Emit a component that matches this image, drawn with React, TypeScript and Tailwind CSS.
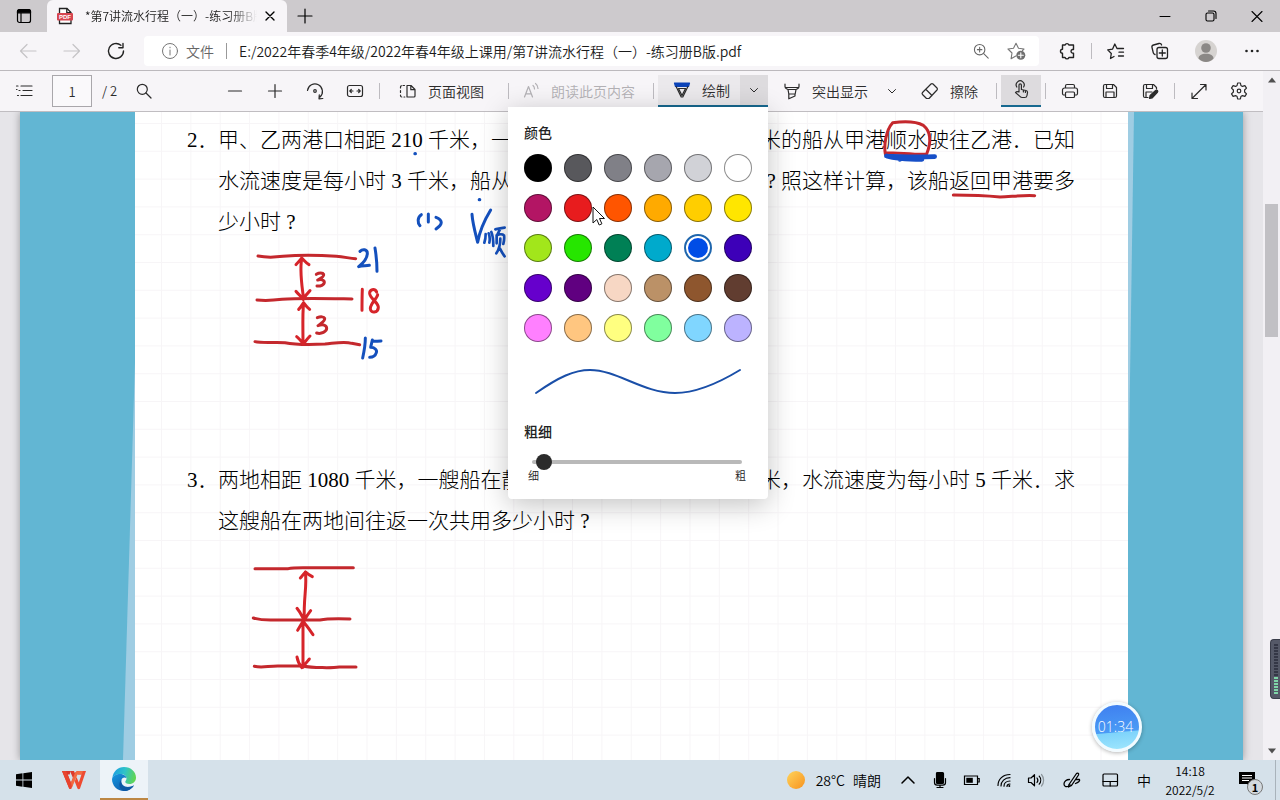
import React, { useState } from "react";

type Kids = { children?: React.ReactNode };

function Icon({
  children,
  className = "w-5 h-5",
  width = 1,
}: Kids & { className?: string; width?: number }) {
  return (
    <svg
      viewBox="0 0 20 20"
      className={`shrink-0 ${className}`}
      fill="none"
      stroke="currentColor"
      strokeWidth={width}
      strokeLinecap="round"
      strokeLinejoin="round"
      aria-hidden="true"
    >
      {children}
    </svg>
  );
}

function IconButton({
  label,
  className = "w-10",
  children,
}: Kids & { label: string; className?: string }) {
  return (
    <button
      type="button"
      aria-label={label}
      className={`flex h-8 shrink-0 items-center justify-center ${className}`}
    >
      {children}
    </button>
  );
}

function Divider() {
  return <span className="mx-1 h-4 w-px shrink-0 bg-[#bdbbc0]" />;
}

const chevronDown = <path d="M6.5 8.5l3.5 3.5 3.5-3.5" />;

function TabBar() {
  return (
    <header className="flex h-8 shrink-0 items-stretch bg-[#cdcacd]">
      <IconButton label="标签页操作" className="w-[47px]">
        <Icon width={1.2}>
          <rect x="3.5" y="3.5" width="13" height="13" rx="2" />
          <path d="M3.5 5.5a2 2 0 012-2h9a2 2 0 012 2v1.3h-13z" fill="currentColor" />
          <path d="M7 7v9.5" />
        </Icon>
      </IconButton>
      <div className="flex w-60 items-center rounded-t-md bg-[#f7f5f8] pl-[9px] pr-1">
        <svg viewBox="0 0 18 18" className="h-[18px] w-[18px] shrink-0" aria-hidden="true">
          <path d="M3.5 1.5h7.5l4 4v11h-11.5z" fill="#fff" stroke="#222" strokeWidth="1.3" />
          <path d="M10.8 1.5v4.2h4.2" fill="none" stroke="#222" strokeWidth="1.3" />
          <rect x="1" y="6" width="16" height="7.5" rx="1" fill="#d64550" />
          <text
            x="9"
            y="12"
            textAnchor="middle"
            fontFamily="Liberation Sans, sans-serif"
            fontWeight="700"
            fontSize="6"
            fill="#fff"
          >
            PDF
          </text>
        </svg>
        <span className="ml-[11px] flex-1 overflow-hidden whitespace-nowrap text-xs text-[#1b1b1b] [mask-image:linear-gradient(to_right,#000_84%,transparent)]">
          *第7讲流水行程（一）-练习册B版
        </span>
        <IconButton label="关闭标签页" className="w-[26px]">
          <Icon className="h-4 w-4" width={1.7}>
            <path d="M5 5l10 10M15 5L5 15" />
          </Icon>
        </IconButton>
      </div>
      <IconButton label="新建标签页" className="w-9">
        <Icon width={1.2}>
          <path d="M10 3v14M3 10h14" />
        </Icon>
      </IconButton>
      <div className="ml-auto flex">
        <IconButton label="最小化" className="w-[46px]">
          <Icon>
            <path d="M5 10.5h10" />
          </Icon>
        </IconButton>
        <IconButton label="还原" className="w-[46px]">
          <Icon width={1.1}>
            <rect x="5" y="7" width="8" height="8" rx="1.5" />
            <path d="M7.5 5h5a2.5 2.5 0 012.5 2.5v5" />
          </Icon>
        </IconButton>
        <IconButton label="关闭" className="w-[46px]">
          <Icon width={1.1}>
            <path d="M5 5.5l10 10M15 5.5l-10 10" />
          </Icon>
        </IconButton>
      </div>
    </header>
  );
}

function AddressBar() {
  return (
    <div className="flex h-[39px] shrink-0 items-center border-b border-[#bcb9bd] bg-[#f7f5f8] px-1.5 text-[#222]">
      <IconButton label="后退" className="w-11 text-[#c5c3c6]">
        <Icon width={1.2}>
          <path d="M18 10H2.5M9 3.5L2.5 10 9 16.5" />
        </Icon>
      </IconButton>
      <IconButton label="前进" className="w-11 text-[#c5c3c6]">
        <Icon width={1.2}>
          <path d="M2 10h15.5M11 3.5l6.5 6.5-6.5 6.5" />
        </Icon>
      </IconButton>
      <IconButton label="刷新" className="w-11">
        <Icon width={1.4}>
          <path d="M17.500 10a7.500 7.500 0 11-2.600-5.700M17 2.500v4.200h-4.200" />
        </Icon>
      </IconButton>
      <div className="ml-1.5 flex h-[30px] min-w-0 flex-1 items-center rounded bg-white pl-4 pr-1 text-sm">
        <Icon className="h-5 w-5 text-[#777]">
          <circle cx="10" cy="10" r="7.5" />
          <path d="M10 9v5M10 6.200v.6" />
        </Icon>
        <span className="ml-1.5 text-[#666]">文件</span>
        <span className="mx-3 h-4 w-px bg-[#999]" />
        <input
          aria-label="地址"
          readOnly
          value="E:/2022年春季4年级/2022年春4年级上课用/第7讲流水行程（一）-练习册B版.pdf"
          className="min-w-0 flex-1 bg-transparent text-[#1b1b1b] outline-none"
        />
        <IconButton label="缩放" className="w-9 text-[#666]">
          <Icon className="h-[18px] w-[18px]" width={1.2}>
            <circle cx="8.5" cy="8.500" r="5.800" />
            <path d="M13 13l5 5M6 8.500h5M8.500 6v5" />
          </Icon>
        </IconButton>
        <IconButton label="添加到收藏夹" className="w-9 text-[#777]">
          <Icon width={1.1}>
            <path d="M8.800 15l-4.700 2.700.9-5.700L1 8l5.500-.8L9 2.200l2.500 5 5.500.8-1.500 1.500" />
            <circle cx="13.800" cy="14.200" r="4.500" fill="#6f6f6f" stroke="none" />
            <path d="M13.800 11.700v5M11.300 14.200h5" stroke="#fff" />
          </Icon>
        </IconButton>
      </div>
      <IconButton label="扩展" className="ml-1.5 w-11">
        <Icon width={1.4}>
          <path d="M5.500 4h2.600a2 2 0 013.800 0h4.600v4.500h-1.200a1.900 1.900 0 000 3.600h1.200v4.400h-4.600a2 2 0 01-3.800 0H5.500v-4.300a2 2 0 010-4z" />
        </Icon>
      </IconButton>
      <span className="mx-0.5 h-4 w-px bg-[#bdbbc0]" />
      <IconButton label="收藏夹" className="w-11">
        <Icon width={1.3}>
          <path d="M8 15.500l-3.500 2 .8-5-3.600-3.600 4.900-.8L8.800 3l2.200 4.500h6.500M13 11.200h4.500M12.500 15h5" />
        </Icon>
      </IconButton>
      <IconButton label="集锦" className="w-11">
        <Icon width={1.3}>
          <rect x="7" y="6.500" width="10.500" height="11" rx="2" />
          <path d="M12.300 9v6M9.300 12h6M5 13.500c-.8-.2-1.500-.8-1.700-1.600L2 6.500c-.3-1.100.4-2.200 1.500-2.500L9 2.500c1.200-.3 2.300.5 2.600 1.500" />
        </Icon>
      </IconButton>
      <IconButton label="个人资料" className="w-12">
        <svg viewBox="0 0 22 22" className="h-[22px] w-[22px]" aria-hidden="true">
          <circle cx="11" cy="11" r="11" fill="#d6d3d1" />
          <circle cx="11" cy="8" r="4.800" fill="#8b8886" />
          <path d="M3.500 18.500c0-3 3-4.800 7.500-4.800s7.500 1.800 7.500 4.800c-2 2.300-4.500 3.500-7.500 3.500s-5.500-1.200-7.500-3.500z" fill="#8b8886" />
        </svg>
      </IconButton>
      <IconButton label="设置及其他" className="w-11">
        <Icon>
          <g fill="currentColor" stroke="none">
            <circle cx="4.5" cy="10" r="1.3" />
            <circle cx="10" cy="10" r="1.3" />
            <circle cx="15.5" cy="10" r="1.3" />
          </g>
        </Icon>
      </IconButton>
    </div>
  );
}

const palette: [string, string][] = [
  ["黑色", "bg-[#000000]"],
  ["深灰", "bg-[#58585c]"],
  ["中灰", "bg-[#808087]"],
  ["灰色", "bg-[#a6a6ae]"],
  ["浅灰", "bg-[#d1d2d7]"],
  ["白色", "bg-[#ffffff]"],
  ["洋红", "bg-[#b31564]"],
  ["红色", "bg-[#e81c1e]"],
  ["橙红", "bg-[#ff5500]"],
  ["橙色", "bg-[#ffaa00]"],
  ["金色", "bg-[#ffce00]"],
  ["黄色", "bg-[#ffe600]"],
  ["黄绿", "bg-[#a2e61b]"],
  ["亮绿", "bg-[#26e600]"],
  ["绿色", "bg-[#008055]"],
  ["青色", "bg-[#00aacc]"],
  ["蓝色", "bg-[#004de6]"],
  ["靛蓝", "bg-[#3d00b8]"],
  ["紫罗兰", "bg-[#6600cc]"],
  ["紫色", "bg-[#600080]"],
  ["浅肤", "bg-[#f7d7c4]"],
  ["棕褐", "bg-[#bb9167]"],
  ["褐色", "bg-[#8e562e]"],
  ["深褐", "bg-[#613d30]"],
  ["粉色", "bg-[#ff80ff]"],
  ["浅橙", "bg-[#ffc680]"],
  ["浅黄", "bg-[#ffff80]"],
  ["浅绿", "bg-[#80ff9e]"],
  ["浅蓝", "bg-[#80d6ff]"],
  ["浅紫", "bg-[#bcb3ff]"],
];

function DrawMenu() {
  const [picked, setPicked] = useState(16);
  return (
    <div className="absolute right-0 top-full z-20 mt-0.5 w-[260px] rounded-b bg-white px-4 pb-[18px] pt-[15px] text-[#222] shadow-[0_6px_28px_rgba(0,0,0,0.24)]">
      <h2 className="text-sm font-medium leading-5">颜色</h2>
      <div className="relative mt-3 grid grid-cols-6 gap-3">
        {palette.map(([name, color], i) => (
          <button
            key={name}
            type="button"
            aria-label={name}
            aria-pressed={i === picked}
            onClick={() => setPicked(i)}
            className={
              i === picked
                ? "flex h-7 w-7 items-center justify-center rounded-full border-2 border-[#1f66ad] bg-white"
                : `h-7 w-7 rounded-full border border-black/45 ${color}`
            }
          >
            {i === picked && <span className={`h-5 w-5 rounded-full ${color}`} />}
          </button>
        ))}
        <svg viewBox="0 0 14 20" className="absolute left-[68px] top-[52px] h-5 w-3.5" aria-hidden="true">
          <path d="M1 1v16l3.800-3.500 2.400 5.500 2.700-1.200-2.400-5.300h5z" fill="#fff" stroke="#111" strokeWidth="1" />
        </svg>
      </div>
      <svg viewBox="0 0 228 40" className="mt-5 h-10 w-full" fill="none" aria-hidden="true">
        <path d="M12 31C35 15 50 8 66 8c27 0 53 23 85 23 20 0 42-9 65-23" stroke="#1a4fa8" strokeWidth="2" strokeLinecap="round" />
      </svg>
      <label htmlFor="thickness" className="mt-[19px] block text-sm font-medium leading-5">
        粗细
      </label>
      <input
        id="thickness"
        type="range"
        min={0}
        max={100}
        defaultValue={2}
        className="ml-2 mt-[13px] block h-4 w-[210px] appearance-none bg-transparent [&::-webkit-slider-runnable-track]:h-1 [&::-webkit-slider-runnable-track]:rounded-full [&::-webkit-slider-runnable-track]:bg-[#b9b9b9] [&::-webkit-slider-thumb]:-mt-1.5 [&::-webkit-slider-thumb]:h-4 [&::-webkit-slider-thumb]:w-4 [&::-webkit-slider-thumb]:appearance-none [&::-webkit-slider-thumb]:rounded-full [&::-webkit-slider-thumb]:bg-[#2b2b2b]"
      />
      <div className="flex justify-between pl-1 pr-1.5 text-[11px] leading-[11px]">
        <span>细</span>
        <span>粗</span>
      </div>
    </div>
  );
}

function PdfToolbar() {
  return (
    <div className="flex h-[41px] shrink-0 items-center justify-between border-b border-[#c0bdc1] bg-[#f7f5f8] px-1 text-sm text-[#2b2b2b]">
      <div className="flex items-center">
        <IconButton label="目录">
          <Icon width={1.2}>
            <path d="M7 5h11M9 9.500h9M7 14.500h11" />
            <path d="M2.500 5h1.500M2.500 8.500h.5M5 9.500h1M3.500 14.500h1" />
          </Icon>
        </IconButton>
        <input
          aria-label="页码"
          defaultValue="1"
          className="ml-2 h-8 w-10 border border-[#a9a7ab] bg-white/40 text-center text-[13px] outline-none"
        />
        <span className="w-8 pl-2.5 text-[13px]">/ 2</span>
        <IconButton label="查找">
          <Icon width={1.2}>
            <circle cx="8.300" cy="8.300" r="5" />
            <path d="M12 12l5 5" />
          </Icon>
        </IconButton>
      </div>
      <div className="flex items-center">
        <IconButton label="缩小">
          <Icon width={1.2}>
            <path d="M3.500 10h13" />
          </Icon>
        </IconButton>
        <IconButton label="放大">
          <Icon width={1.2}>
            <path d="M3.500 10h13M10 3.500v13" />
          </Icon>
        </IconButton>
        <IconButton label="旋转">
          <Icon width={1.2}>
            <path d="M2.500 9.500a7.500 7.500 0 1112.500 6.500M17.800 17.500l-3.800.3.300-4" />
            <circle cx="10" cy="10" r="1.300" />
          </Icon>
        </IconButton>
        <IconButton label="适应宽度">
          <Icon width={1.2}>
            <rect x="2.500" y="4.500" width="15" height="11" rx="2" />
            <path d="M5 10h3M6.300 8.500L4.800 10l1.500 1.500M15 10h-3M13.700 8.500l1.500 1.500-1.500 1.500" />
          </Icon>
        </IconButton>
        <Divider />
        <button type="button" className="flex h-8 w-[120px] items-center gap-2.5 whitespace-nowrap pl-3.5">
          <Icon width={1.2}>
            <path d="M9 4.500h4l4 4v6.500a1 1 0 01-1 1H9zM12.800 4.500v4.200H17" />
            <path d="M6.500 4.500H5M2.500 7v-.8a1.700 1.700 0 01.8-1.500M2.500 9.500v2M2.500 14v.5c0 .8.500 1.500 1.300 1.500M6 16h.8" />
          </Icon>
          页面视图
        </button>
        <Divider />
        <button
          type="button"
          disabled
          className="flex h-8 w-[136px] items-center gap-2.5 whitespace-nowrap pl-2 text-[#b3b1b5]"
        >
          <Icon width={1.2}>
            <path d="M3.500 16l4-10.500 4 10.500M4.800 12.800h5.400M12 4.500c.9.800 1.500 2 1.500 3.500M14.500 2.500c1.600 1.200 2.500 2.900 2.500 5" />
          </Icon>
          朗读此页内容
        </button>
        <Divider />
        <div className="relative flex h-8 border-b-2 border-[#16688f] bg-[#ebe9ec]">
          <button type="button" className="flex w-[82px] items-center gap-2.5 whitespace-nowrap pl-3.5">
            <Icon width={1.2}>
              <path d="M2.500 3h15l-1 3.500h-13z" fill="#0b43b8" stroke="#0b43b8" />
              <path d="M4.200 6.800L9.200 17h1.600l5-10.200M6.500 8.500L10 15.500l3.500-7z" />
            </Icon>
            绘制
          </button>
          <button
            type="button"
            aria-label="绘制选项"
            aria-expanded="true"
            className="flex w-7 items-center justify-center bg-[#dddbde]"
          >
            <Icon>{chevronDown}</Icon>
          </button>
          <DrawMenu />
        </div>
        <button type="button" className="ml-1 flex h-8 w-[104px] items-center gap-2.5 whitespace-nowrap pl-2.5">
          <Icon width={1.2}>
            <path d="M3 3v2.500c0 1 .5 1.800 1.500 2.200L6 8.500h8l1.500-.8c1-.4 1.500-1.200 1.500-2.200V3M3.500 6.500h13M6 8.500l.8 4.500h6.400l.8-4.500M6.800 13v4.800l6.200-2.800v-2" />
          </Icon>
          突出显示
        </button>
        <IconButton label="突出显示选项" className="w-8">
          <Icon>{chevronDown}</Icon>
        </IconButton>
        <button type="button" className="ml-1 flex h-8 w-20 items-center gap-2.5 whitespace-nowrap pl-2">
          <Icon width={1.2}>
            <path d="M2.500 11.500l8.500-8.500a1.500 1.500 0 012 0l4 4a1.500 1.500 0 010 2l-8 8.500H6.500l-4-4a1.500 1.500 0 010-2zM6 8.500l6 6" />
          </Icon>
          擦除
        </button>
        <Divider />
        <button
          type="button"
          aria-label="触摸绘图"
          aria-pressed="true"
          className="flex h-8 w-10 items-center justify-center border-b-2 border-[#16688f] bg-[#dddbde]"
        >
          <Icon width={1.2}>
            <path d="M8 12V5a1.200 1.200 0 012.400 0v4.500l4.600 1c1 .2 1.600 1 1.500 2l-.5 3c-.2 1.300-1 2-2.300 2h-2.600c-.8 0-1.400-.3-1.900-.9L4.500 12.500c1-1.300 2.500-.9 3.500-.5zM5.800 7a4 4 0 116.800 0M12.400 10v2M14.400 10.500v2" />
          </Icon>
        </button>
        <Divider />
        <IconButton label="打印">
          <Icon width={1.2}>
            <path d="M5.500 7V5a1.500 1.500 0 011.500-1.500h6A1.500 1.500 0 0114.500 5v2M5.500 14H4a1.500 1.500 0 01-1.500-1.500V9A2 2 0 014.500 7h11a2 2 0 012 2v3.500A1.500 1.500 0 0116 14h-1.500" />
            <rect x="5.500" y="11" width="9" height="5.500" rx="1" />
          </Icon>
        </IconButton>
        <IconButton label="保存">
          <Icon width={1.2}>
            <path d="M5 3.500h8.500l3 3V15a1.500 1.500 0 01-1.500 1.500H5A1.500 1.500 0 013.500 15V5A1.500 1.500 0 015 3.500z" />
            <path d="M6.500 3.500V7.500h6v-4M6 16.500V11h8v5.500" />
          </Icon>
        </IconButton>
        <IconButton label="另存为">
          <Icon width={1.2}>
            <path d="M8 16.500H5A1.500 1.500 0 013.500 15V5A1.500 1.500 0 015 3.500h8.500l3 3V8" />
            <path d="M6.500 3.500V7.500h6v-4M6 16.500V11h6" />
            <path d="M9.500 17.500l.6-3 5.500-5c1.300-1.100 2.900.6 1.800 1.800l-5.100 5.500z" fill="currentColor" />
          </Icon>
        </IconButton>
        <Divider />
        <IconButton label="全屏">
          <Icon width={1.2}>
            <path d="M3.500 17L16.500 4M11.500 3.500h5.500V9M3 12v5.500h5.500" />
          </Icon>
        </IconButton>
        <IconButton label="设置">
          <Icon width={1.2}>
            <path d="M8.600 2h2.800l.5 2.500 1.500.9 2.500-.8 1.600 2.500-1.900 1.900v2l1.900 1.900-1.600 2.500-2.500-.8-1.500.9-.5 2.500H8.600l-.5-2.500-1.500-.9-2.500.8-1.600-2.500L4.400 11V9L2.500 7.100l1.600-2.500 2.500.8 1.500-.9z" />
            <circle cx="10" cy="10" r="1.800" />
          </Icon>
        </IconButton>
      </div>
    </div>
  );
}

function Handwriting() {
  return (
    <svg
      viewBox="0 0 1263 648"
      className="pointer-events-none absolute left-0 top-0 h-[648px] w-[1263px]"
      fill="none"
      strokeLinecap="round"
      strokeLinejoin="round"
      aria-hidden="true"
    >
      <g transform="scale(0.33333)" strokeWidth="9">
        <g stroke="#c4282d">
          <path d="M774 432c20 4 50 4 75 1 50-5 110-4 160 0 25 2 40 6 58 7" />
          <path d="M771 564c30 3 50 1 75-2 50-4 140-2 210-1" />
          <path d="M765 689c20 5 60 1 90 3 40 8 80 6 120 4 40-4 60-8 80-2l24 4" />
          <path d="M905 440c-6 35 0 80 6 120M888 458c6-8 12-12 17-20 8 8 14 16 22 20M888 538c8 8 14 16 22 24 6-10 12-18 20-26" stroke="#d6242a" />
          <path d="M911 572c-4 30-2 80-2 122M896 592c6-6 10-12 15-20 6 8 10 14 18 20M890 674c8 6 14 14 20 22 6-8 12-16 20-24" stroke="#d6242a" />
          <path d="M949 487c8-5 20-5 22 0 2 6-8 12-18 17 10-3 20 0 20 7 0 8-12 12-22 11" />
          <path d="M952 617c10-4 20-3 22 2 2 8-12 16-20 22 14-5 26-2 26 8 0 10-16 18-30 14" />
          <path d="M1087 532c-1 22-1 45-1 63" stroke="#d6242a" />
          <path d="M1130 540c-6-12-22-8-21 5 2 16 27 26 26 42-1 16-23 18-24 3 0-16 20-30 22-42" stroke="#d6242a" />
        </g>
        <g stroke="#1450bd">
          <path d="M1080 418c8-8 22-6 22 6 0 16-16 32-26 40 10-4 20-2 32-4M1125 408c4 24 6 44 6 70" />
          <path d="M1096 678c0 22-4 42-8 60M1117 684l-5 22c12 0 20 8 17 16-3 10-12 14-20 14M1116 688c10 0 18 0 27-1" />
          <path d="M1264 308c-12 8-12 24-4 33M1285 306v24M1308 316c20 8 22 20 0 35" />
          <path d="M1416 307c2 28 10 56 17 84 6-34 20-66 39-97" />
          <path d="M1457 366c0 10-1 18-4 26M1466 364c4 10 4 18 2 28M1474 360c6 14 6 26 6 42M1486 352c10-2 18-4 28-5M1500 352l-8 16M1490 370v24M1490 370c8-4 18-4 22 0 2 10 0 18-2 26M1501 380c0 20-4 32-12 44M1500 410c4 8 8 16 14 23" strokeWidth="8" />
          <path d="M1245 125h1M1438 263h1" strokeWidth="10" />
        </g>
      </g>
      <g transform="translate(0 348) scale(0.33333)" strokeWidth="9" stroke="#c4282d">
        <path d="M765 326h100c15-4 40-3 60-3h135" />
        <path d="M760 474c25 7 40 6 60 6h140c15-3 60-4 90-3" />
        <path d="M763 619c25 5 40-1 70-1h75c30 6 90 6 110 3h50" />
        <path d="M916 336c6 40-6 80-3 142M901 354c6-6 10-14 16-18 6 6 12 10 20 14M891 445c10 12 14 22 22 36 6-12 12-20 19-29" stroke="#d6242a" />
        <path d="M909 484v138M893 511l16-27c12 14 20 26 30 40M891 591c2 14 8 24 15 32 8-8 14-16 22-26" stroke="#d6242a" />
      </g>
      <g transform="translate(760 -2) scale(0.33333)">
        <path d="M376 132c-4-22 0-70 22-94 30-4 70-4 92 8 22 18 24 50 10 86M376 128c40 0 80 6 122 5" stroke="#c4282d" strokeWidth="9" />
        <path d="M379 138c30 2 90 3 145 2M380 138c30 10 70 10 106 10M419 148h1" stroke="#164fc8" strokeWidth="14" />
        <path d="M580 255c50 0 100 2 140 6 30 0 60-6 104-4" stroke="#c4282d" strokeWidth="9" />
      </g>
    </svg>
  );
}

function Line({ left, right }: { left: string; right?: string }) {
  return (
    <p className="flex justify-between whitespace-nowrap">
      <span>{left}</span>
      {right && <span>{right}</span>}
    </p>
  );
}

function Worksheet() {
  return (
    <main className="relative flex min-h-0 flex-1 overflow-hidden bg-[#e6e5e9] px-5">
      <div className="flex flex-1 bg-white shadow-[0_0_8px_rgba(0,0,0,0.35)]">
        <div className="w-[115px] shrink-0 bg-[#62b6d3]">
          <svg viewBox="0 0 115 648" className="h-[648px] w-full" aria-hidden="true">
            <path d="M115 250L103 648h12z" fill="#9fcde3" />
          </svg>
        </div>
        <article className="relative min-w-0 flex-1 pl-[52px] pr-[53px] pt-2 font-['Liberation_Serif','Noto_Sans_CJK_SC',sans-serif] text-[21px] font-light leading-[41px] text-black">
          <svg className="absolute inset-0 h-full w-full" aria-hidden="true">
            <defs>
              <pattern id="grid" x="26" y="11" width="29.36" height="27.8" patternUnits="userSpaceOnUse">
                <path d="M.5 0V27.800M0 .5H29.360" stroke="#f7f5f7" strokeWidth="1" fill="none" />
              </pattern>
            </defs>
            <rect width="100%" height="100%" fill="url(#grid)" />
          </svg>
          <section className="relative flex">
            <span className="w-[31px] whitespace-nowrap">2．</span>
            <div className="flex-1">
              <Line left="甲、乙两港口相距 210 千米，一" right="米的船从甲港顺水驶往乙港．已知" />
              <Line left="水流速度是每小时 3 千米，船从" right="? 照这样计算，该船返回甲港要多" />
              <Line left="少小时 ?" />
            </div>
          </section>
          <section className="relative mt-[217px] flex">
            <span className="w-[31px] whitespace-nowrap">3．</span>
            <div className="flex-1">
              <Line left="两地相距 1080 千米，一艘船在静" right="米，水流速度为每小时 5 千米．求" />
              <Line left="这艘船在两地间往返一次共用多少小时 ?" />
            </div>
          </section>
        </article>
        <div className="w-[115px] shrink-0 bg-[#62b6d3]">
          <svg viewBox="0 0 115 648" className="h-[648px] w-full" aria-hidden="true">
            <path d="M0 0h6L0 400z" fill="#9fcde3" />
          </svg>
        </div>
      </div>
      <Handwriting />
      <div
        role="timer"
        className="absolute bottom-2 right-[121px] flex h-[50px] w-[50px] items-center justify-center rounded-full border-[3px] border-[#f2fbff] bg-[linear-gradient(175deg,#3f7ff0_0%,#4a9bf5_60%,#7ed3fb_62%,#9ee6fd_100%)] pr-[3px] font-['Open_Sans',sans-serif] text-sm text-white shadow-[0_1px_4px_rgba(0,0,0,0.3)]"
      >
        01:34
      </div>
    </main>
  );
}

function Scrollbar() {
  return (
    <div className="flex w-[17px] shrink-0 flex-col items-center bg-[#f2f0f4] py-1.5" aria-hidden="true">
      <svg viewBox="0 0 8 6" className="h-1.5 w-2">
        <path d="M0 5.500L4 .500 8 5.500z" fill="#505050" />
      </svg>
      <span className="mt-[121px] h-[133px] w-[13px] bg-[#c1c0c4]" />
      <svg viewBox="0 0 8 6" className="mt-auto h-1.5 w-2">
        <path d="M0 .500h8L4 5.500z" fill="#505050" />
      </svg>
    </div>
  );
}

function Taskbar() {
  return (
    <footer className="flex h-10 shrink-0 items-center bg-[#d5e1ea] text-black">
      <div className="flex h-full gap-0.5">
        <button type="button" aria-label="开始" className="flex w-12 items-center justify-center">
          <svg viewBox="0 0 16 16" className="h-4 w-4" aria-hidden="true">
            <path d="M0 2.200l6.500-.9v6.300H0zM7.300 1.200L16 0v7.600H7.300zM0 8.400h6.500v6.300L0 13.800zM7.300 8.400H16V16l-8.700-1.200z" />
          </svg>
        </button>
        <button type="button" aria-label="WPS Office" className="flex w-12 items-center justify-center">
          <svg viewBox="0 0 24 20" className="h-5 w-6" aria-hidden="true">
            <path d="M0 1h8.500l-.8 3.500H5.800L8.500 12l-1 7z" fill="#d9352b" />
            <path d="M0 1h4l5 11.500 3.500-8.500c.7-1.800 2.200-3 4-3h-1.500L9.500 18.500c-.4.800-2 .8-2.400 0z" fill="#e8432e" />
            <path d="M14.500 1H24l-6 17.500c-.4.900-2.100.9-2.500 0l-2.800-7 1.800-4.500 2.300 5.500 2.700-8h-3.800z" fill="#ee4a31" />
            <path d="M8 1h4l1.800 4.500-2 4.500z" fill="#dc3a2c" />
            <path d="M16.500 1c-1.800 0-3.300 1.200-4 3L9 12.500l1 5L15.500 4.500h4.200L21 1z" fill="#f26a42" />
          </svg>
        </button>
        <button
          type="button"
          aria-label="Microsoft Edge"
          className="flex w-12 items-center justify-center border-b-2 border-[#bd8743] bg-[#edf3f8]"
        >
          <svg viewBox="0 0 24 24" className="h-6 w-6" aria-hidden="true">
            <defs>
              <linearGradient id="edgeTop" x1="0" y1="0.300" x2="1" y2="0.500">
                <stop offset="0" stopColor="#1b9de2" />
                <stop offset="0.500" stopColor="#2fc3c8" />
                <stop offset="1" stopColor="#62d64f" />
              </linearGradient>
              <linearGradient id="edgeLow" x1="0" y1="0" x2="1" y2="1">
                <stop offset="0" stopColor="#1597e0" />
                <stop offset="1" stopColor="#0f4f9f" />
              </linearGradient>
            </defs>
            <path d="M.4 11C1 4.500 6 0 12 0c7 0 12 5 12 10.500 0 4-3 6.500-6.500 6.500-3 0-4.500-1.200-4.200-2.400.3-1 1.200-1.300 1.200-3.100C14.500 9 12 7 8.500 7 5 7 2 8.500.4 11z" fill="url(#edgeTop)" />
            <path d="M0 12c1-3.500 4.500-5 8-5 3.300 0 6.300 1.800 6.500 4.300C13 9.800 9.500 10.500 9.200 14c-.3 4 4 6.500 8.300 5.800 1.700-.2 3.100-.9 4.500-1.600C20 21.500 16.500 24 12 24 5 24 0 18.500 0 12z" fill="url(#edgeLow)" />
            <path d="M9.300 13c-.8 4.500 3.200 8.500 8.200 7.300 1.800-.4 3.400-1.200 4.500-2.100-2 3.500-5.700 5.800-10 5.800C7 22.500 6 16 9.300 13z" fill="#0c59a4" />
          </svg>
        </button>
      </div>
      <div className="ml-auto flex h-full items-center text-sm">
        <button type="button" className="flex items-center pr-[11px]">
          <span className="mr-[11px] h-[18px] w-[18px] rounded-full bg-[linear-gradient(135deg,#ffd45c,#f7921e)]" />
          28°C<span className="ml-2">晴朗</span>
        </button>
        <IconButton label="显示隐藏的图标" className="w-8">
          <Icon width={1.5}>
            <path d="M4 13l6-6 6 6" />
          </Icon>
        </IconButton>
        <IconButton label="麦克风" className="w-8">
          <Icon width={1.2}>
            <rect x="6.500" y="2.500" width="7" height="11" rx="1" fill="currentColor" />
            <path d="M4.500 8.500v4c0 1.500 1.200 2.700 2.700 2.700h5.600c1.500 0 2.700-1.200 2.700-2.700v-4M10 15v2.500M7 17.500h6" />
          </Icon>
        </IconButton>
        <IconButton label="电池" className="w-8">
          <Icon width={1.2}>
            <path d="M2.500 6h13v8.500h-13zM15.500 8.500h1.700V12h-1.700" strokeLinejoin="miter" />
            <path d="M4.300 7.800h6.500v5H4.300z" fill="currentColor" stroke="none" />
          </Icon>
        </IconButton>
        <IconButton label="网络" className="w-8">
          <Icon width={1.2}>
            <path d="M4 15.500C4 9.200 9 4.500 16 4.500M7 16c0-4.700 3.700-8.300 9-8.300M10 16.200c0-3 2.500-5.200 6-5.200M13 16.500c0-1.400 1.300-2.500 3-2.500" />
            <circle cx="15.300" cy="16" r="1" fill="currentColor" stroke="none" />
          </Icon>
        </IconButton>
        <IconButton label="音量" className="w-8">
          <Icon width={1.2}>
            <path d="M2.500 8v4.500H5l3.500 3.300V4.700L5 8zM11 8c1 1.300 1 3.200 0 4.500" />
            <path d="M13.200 6.200c2 2.300 2 5.700 0 8" />
            <path d="M15.500 4.500c2.800 3.300 2.800 8.200 0 11.500" stroke="#8d969c" />
          </Icon>
        </IconButton>
        <IconButton label="Windows Ink 工作区" className="w-10">
          <Icon width={1.3}>
            <path d="M7 14.500L14.500 3.500c1-1 2.700.2 2 1.500L9.500 15.500zM7 14.500l-.5 2.500 3-1.500M7.500 9.500c-3 0-5.500 2-5.500 4.500 0 2 1.800 3 3.500 2.500M13.500 9.500h4c.8 1.500-1.500 3-4 4" />
          </Icon>
        </IconButton>
        <IconButton label="触摸板" className="w-9">
          <Icon width={1.2}>
            <rect x="3" y="4" width="14.500" height="12" rx="1" />
            <path d="M3 11.500h14.500M10.200 11.500V16" />
          </Icon>
        </IconButton>
        <button type="button" className="w-8 text-sm">
          中
        </button>
        <div className="w-[60px] text-center text-xs leading-[19px]">
          <div>14:18</div>
          <div>2022/5/2</div>
        </div>
        <button type="button" aria-label="通知" className="relative flex h-full w-[55px] items-center justify-center pr-0.5">
          <svg viewBox="0 0 16 16" className="h-4 w-4" aria-hidden="true">
            <path d="M0 0h16v12h-4v3.500L8 12H0z" />
            <path d="M3 3.500h10M3 6h10M3 8.500h7" stroke="#fff" />
          </svg>
          <span className="absolute bottom-[5px] right-3 flex h-4 w-4 items-center justify-center rounded-full border border-[#777] bg-[#d3d9de] text-[11px] font-bold leading-none">
            1
          </span>
        </button>
        <span className="mr-1 h-full w-px bg-[#a9b3bb]" />
      </div>
    </footer>
  );
}

const levels = Array.from({ length: 17 }, (_, i) => i);

export default function App() {
  return (
    <div className="relative flex h-screen flex-col overflow-hidden font-['Noto_Sans_CJK_SC',sans-serif] font-[350]">
      <TabBar />
      <AddressBar />
      <div className="flex min-h-0 flex-1">
        <div className="flex min-w-0 flex-1 flex-col">
          <PdfToolbar />
          <Worksheet />
        </div>
        <Scrollbar />
      </div>
      <Taskbar />
      <div className="absolute bottom-[101px] right-0 flex h-[60px] w-2.5 flex-col justify-center gap-px rounded-l border border-r-0 border-[#3a3d4a] bg-[#555968] pl-[3px]">
        {levels.map((i) => (
          <span key={i} className={i < 11 ? "h-[2px] w-1 bg-[#343746]" : "h-[2px] w-1 bg-[#7fd6a8]"} />
        ))}
      </div>
    </div>
  );
}
